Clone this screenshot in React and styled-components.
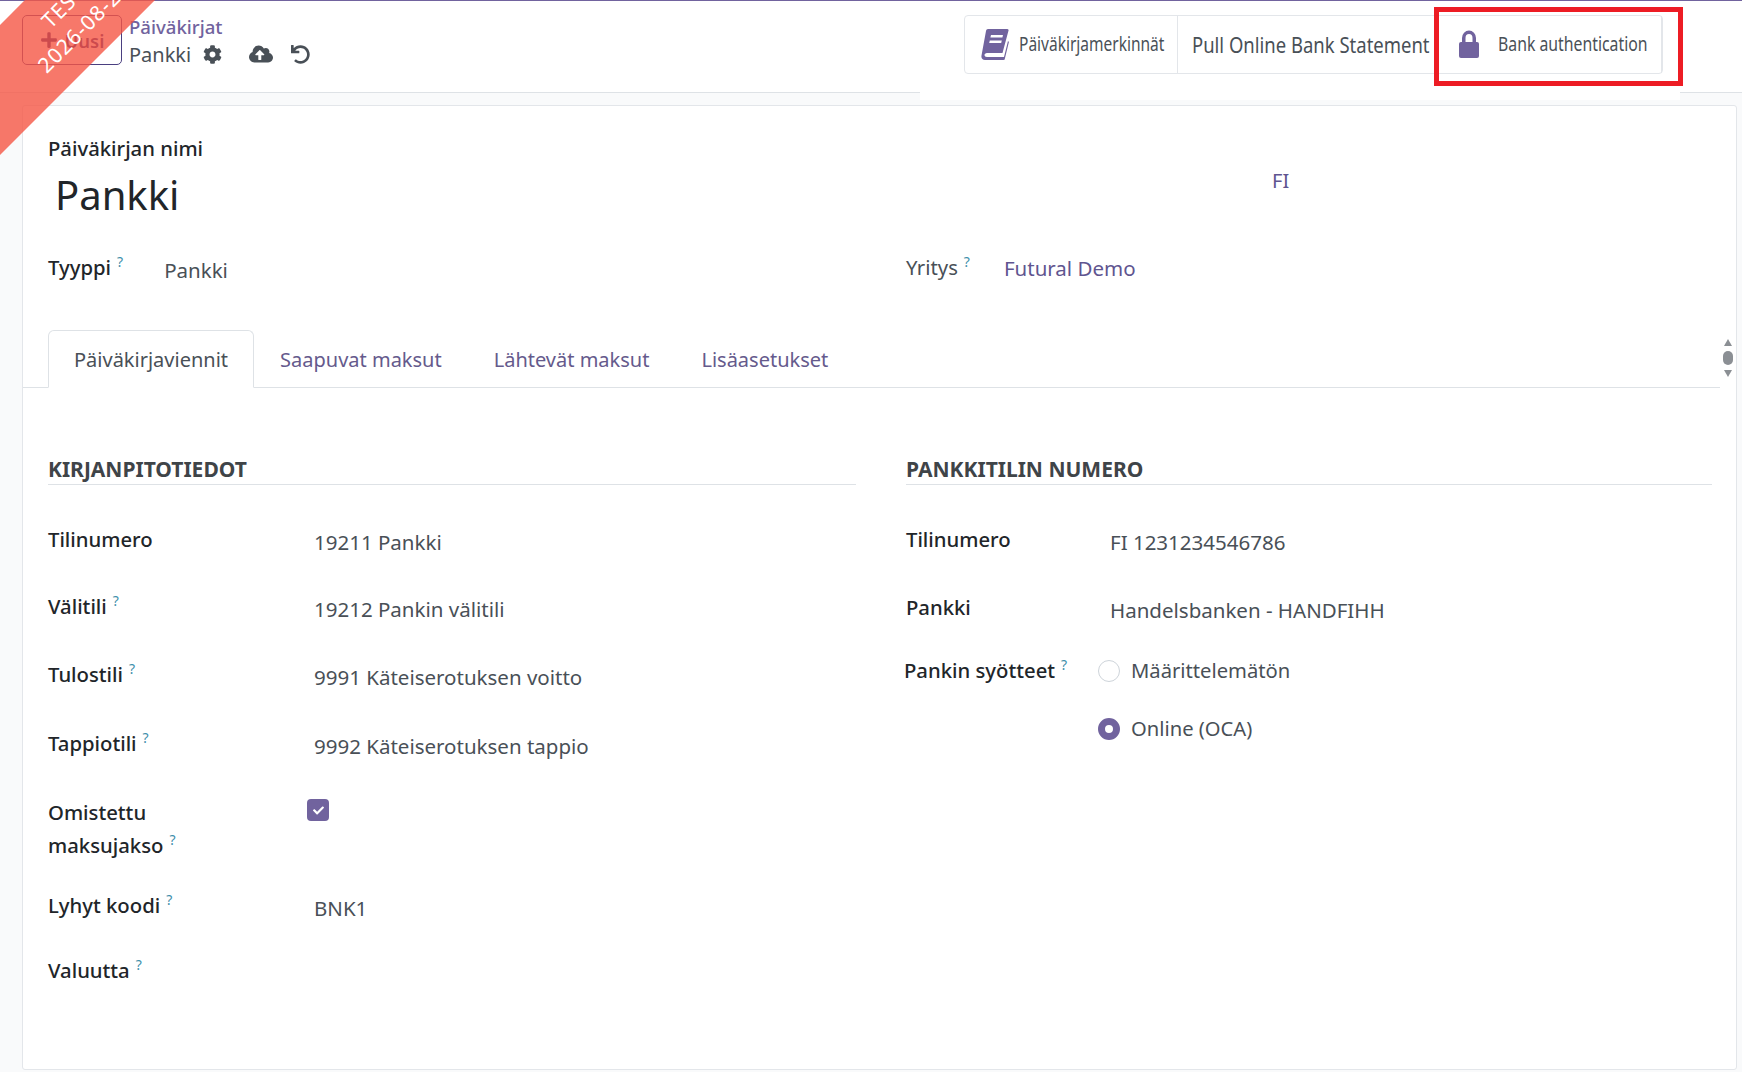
import React from "react";
import styled, { createGlobalStyle } from "styled-components";
import { FaCheck, FaCloudUploadAlt, FaCog, FaPlus, FaUndo } from "react-icons/fa";

const GlobalStyle = createGlobalStyle`
  html, body { margin: 0; padding: 0; }
  body {
    font-family: "Noto Sans", "Open Sans", sans-serif;
    color: #212529;
    background: #f9fafb;
  }
`;

const leftRows = [
  { label: "Tilinumero", value: "19211 Pankki", h: 67 },
  { label: "Välitili", help: true, value: "19212 Pankin välitili", h: 68 },
  { label: "Tulostili", help: true, value: "9991 Käteiserotuksen voitto", h: 69 },
  { label: "Tappiotili", help: true, value: "9992 Käteiserotuksen tappio", h: 69 },
  { label: "Omistettu maksujakso", help: true, check: true, h: 93 },
  { label: "Lyhyt koodi", help: true, value: "BNK1", h: 65 },
  { label: "Valuutta", help: true, h: 40 }
];

const tabs = ["Päiväkirjaviennit", "Saapuvat maksut", "Lähtevät maksut", "Lisäasetukset"];

const Help = () => <HelpMark>?</HelpMark>;

const BookIcon = () => (
  <svg width="28" height="32" viewBox="0 0 28 32" fill="#71639e">
    <path d="M7 1H26a1.5 1.5 0 0 1 1.4 2L21.5 25H6c-1.5 0-2.5 1-2.5 2s1 2 2.5 2h17l4-16 .9 1-4 16.500a1.500 1.500 0 0 1-1.500 1.500H4c-2.500 0-4-2-3.500-4.500L5 3c.2-1.200 1-2 2-2z" />
    <path d="M10 7h12l-.6 2.500h-12zM8.800 12.500h12l-.6 2.500h-12z" fill="#fff" />
  </svg>
);

const LockIcon = () => (
  <svg width="20" height="29" viewBox="0 0 20 29" fill="#71639e">
    <path d="M3 13V9a7 7.500 0 0 1 14 0v4h-3.500V9a3.500 4 0 0 0-7 0v4z" />
    <rect x="0" y="13" width="20" height="16" rx="2" />
  </svg>
);

export default function App() {
  return (
    <Page>
      <GlobalStyle />
      <ControlPanel>
        <NewButton>
          <FaPlus size={18} />
          Uusi
        </NewButton>
        <Breadcrumbs>
          <CrumbLink>Päiväkirjat</CrumbLink>
          <CrumbRow>
            <span>Pankki</span>
            <FaCog size={19} />
            <CloudIcon size={24} />
            <UndoIcon size={19} />
          </CrumbRow>
        </Breadcrumbs>
        <StatPanel>
          <StatGroup>
            <StatButton $w={213} $pad={16} $gap={10}>
              <BookIcon />
              <StatText $w={146} $scale={0.775}>Päiväkirjamerkinnät</StatText>
            </StatButton>
            <StatButton $w={261} $pad={14}>
              <StatText $w={238} $size={22} $scale={0.84}>Pull Online Bank Statement</StatText>
            </StatButton>
            <StatButton $w={223} $pad={20} $gap={19}>
              <LockIcon />
              <StatText $w={149} $scale={0.79}>Bank authentication</StatText>
            </StatButton>
            <Highlight />
          </StatGroup>
        </StatPanel>
      </ControlPanel>

      <Sheet>
        <TitleRow>
          <TitleBlock>
            <TitleLabel>Päiväkirjan nimi</TitleLabel>
            <Title>Pankki</Title>
          </TitleBlock>
          <CountryCode>FI</CountryCode>
        </TitleRow>

        <InfoRow>
          <InfoField $gap={41}>
            <Label>Tyyppi<Help /></Label>
            <Value>Pankki</Value>
          </InfoField>
          <InfoField $gap={34}>
            <LightLabel>Yritys<Help /></LightLabel>
            <CompanyLink>Futural Demo</CompanyLink>
          </InfoField>
        </InfoRow>

        <TabBar>
          {tabs.map((tab, index) => (
            <Tab key={tab} $active={index === 0}>{tab}</Tab>
          ))}
          <Scroller>
            <ArrowUp />
            <Thumb />
            <ArrowDown />
          </Scroller>
        </TabBar>

        <Columns>
          <Column>
            <SectionTitle>Kirjanpitotiedot</SectionTitle>
            <Rows>
              {leftRows.map((row) => (
                <FormRow key={row.label} $h={row.h} $label={266}>
                  <Label $narrow={row.check}>{row.label}{row.help && <Help />}</Label>
                  {row.check ? (
                    <CheckBox><FaCheck size={11} /></CheckBox>
                  ) : (
                    <Value>{row.value}</Value>
                  )}
                </FormRow>
              ))}
            </Rows>
          </Column>
          <Column>
            <SectionTitle>Pankkitilin numero</SectionTitle>
            <Rows>
              <FormRow $h={68} $label={204}>
                <Label>Tilinumero</Label>
                <Value>FI 1231234546786</Value>
              </FormRow>
              <FormRow $h={63} $label={204}>
                <Label>Pankki</Label>
                <Value>Handelsbanken - HANDFIHH</Value>
              </FormRow>
              <FormRow $h={116} $label={204}>
                <FeedLabel>Pankin syötteet<Help /></FeedLabel>
                <RadioList>
                  <RadioOption>
                    <Radio />
                    Määrittelemätön
                  </RadioOption>
                  <RadioOption>
                    <Radio $checked />
                    Online (OCA)
                  </RadioOption>
                </RadioList>
              </FormRow>
            </Rows>
          </Column>
        </Columns>
      </Sheet>

      <RibbonClip>
        <Ribbon>
          <span>TEST</span>
          <span>2026-08-21</span>
        </Ribbon>
      </RibbonClip>
    </Page>
  );
}

const Page = styled.div`
  position: relative;
  width: 1742px;
  height: 1072px;
  overflow: hidden;
  background: #f9fafb;
`;

const ControlPanel = styled.header`
  height: 93px;
  display: flex;
  align-items: flex-start;
  background: #fff;
  border-top: 1px solid #71639e;
  border-bottom: 1px solid #dee2e6;
  box-sizing: border-box;
  padding-left: 22px;
`;

const NewButton = styled.button`
  width: 100px;
  height: 50px;
  margin-top: 14px;
  display: flex;
  align-items: center;
  justify-content: center;
  gap: 7px;
  background: #fff;
  border: 1px solid #4a3f80;
  border-radius: 5px;
  color: #2a1a70;
  font: 600 18.500px "Noto Sans", sans-serif;
`;

const Breadcrumbs = styled.div`
  margin: 13px 0 0 7px;
  display: flex;
  flex-direction: column;
`;

const CrumbLink = styled.a`
  font-size: 18.600px;
  line-height: 26px;
  font-weight: 500;
  color: #71639e;
`;

const CrumbRow = styled.div`
  display: flex;
  align-items: center;
  height: 28px;
  font-size: 20px;
  color: #495057;
  gap: 12px;
`;

const CloudIcon = styled(FaCloudUploadAlt)`
  margin-left: 15px;
`;

const UndoIcon = styled(FaUndo)`
  margin-left: 6px;
`;

const StatPanel = styled.div`
  position: absolute;
  top: 1px;
  left: 920px;
  width: 760px;
  height: 99px;
  background: #fff;
  padding: 14px 0 0 44px;
  box-sizing: border-box;
  z-index: 1;
`;

const StatGroup = styled.div`
  position: relative;
  display: inline-flex;
  height: 57px;
  border: 1px solid #e3e6ea;
  border-radius: 4px;
  background: #fff;
`;

const StatButton = styled.div`
  width: ${(p) => p.$w}px;
  box-sizing: border-box;
  padding: 0 0 2px ${(p) => p.$pad}px;
  display: flex;
  align-items: center;
  gap: ${(p) => p.$gap || 0}px;
  border-right: 1px solid #e3e6ea;
  &:last-of-type { border-right: 0; }
`;

// the reference squeezes this strip sideways, so the text is scaled to its width
const StatText = styled.span`
  display: block;
  width: ${(p) => p.$w}px;
  white-space: nowrap;
  font-size: ${(p) => p.$size || 20}px;
  color: #495057;
  transform-origin: left center;
  transform: scaleX(${(p) => p.$scale});
`;

const Highlight = styled.div`
  position: absolute;
  top: -9px;
  left: 469px;
  width: 249px;
  height: 79px;
  box-sizing: border-box;
  border: 5px solid #ed1c24;
`;

const Sheet = styled.main`
  margin: 12px 5px 0 22px;
  height: 965px;
  box-sizing: border-box;
  background: #fff;
  border: 1px solid #e3e6ea;
  border-radius: 3px;
  padding: 28px 0 0 25px;
`;

const TitleRow = styled.div`
  display: flex;
`;

const TitleBlock = styled.div`
  width: 1225px;
`;

const TitleLabel = styled.div`
  font-size: 20.300px;
  line-height: 28px;
  font-weight: 500;
`;

const Title = styled.h1`
  margin: 3px 0 0 7px;
  font-size: 40px;
  line-height: 60px;
  font-weight: 400;
`;

const CountryCode = styled.div`
  margin-top: 34px;
  margin-left: -1px;
  font-size: 20px;
  line-height: 26px;
  color: #5f5590;
`;

const InfoRow = styled.div`
  margin-top: 26px;
  display: grid;
  grid-template-columns: 858px 1fr;
`;

const InfoField = styled.div`
  display: flex;
  align-items: flex-start;
  gap: ${(p) => p.$gap}px;
`;

const Label = styled.div`
  font-size: 20.300px;
  line-height: 33px;
  font-weight: 500;
  color: #212529;
  max-width: ${(p) => (p.$narrow ? "150px" : "none")};
`;

const LightLabel = styled(Label)`
  font-weight: 400;
  color: #495057;
`;

const FeedLabel = styled(Label)`
  margin-left: -2px;
`;

const HelpMark = styled.sup`
  margin-left: 6px;
  font-size: 14px;
  line-height: 0;
  font-weight: 400;
  color: #3f8fab;
  vertical-align: 8px;
`;

const Value = styled.div`
  font-size: 20.500px;
  line-height: 33px;
  color: #495057;
  padding-top: 3px;
`;

const CompanyLink = styled(Value)`
  color: #5f5590;
  padding-top: 1px;
`;

const TabBar = styled.nav`
  position: relative;
  margin: 43px 16px 0 -25px;
  padding-left: 25px;
  height: 58px;
  box-sizing: border-box;
  display: flex;
  border-bottom: 1px solid #dee2e6;
`;

const Tab = styled.div`
  height: 58px;
  box-sizing: border-box;
  display: flex;
  align-items: center;
  padding: 0 25px;
  font-size: 20px;
  color: ${(p) => (p.$active ? "#495057" : "#655a8c")};
  background: ${(p) => (p.$active ? "#fff" : "transparent")};
  border: 1px solid ${(p) => (p.$active ? "#dee2e6" : "transparent")};
  border-bottom-color: ${(p) => (p.$active ? "#fff" : "transparent")};
  border-radius: 6px 6px 0 0;
`;

const Scroller = styled.div`
  position: absolute;
  top: 9px;
  right: -13px;
  display: flex;
  flex-direction: column;
  align-items: center;
  gap: 5px;
`;

const ArrowUp = styled.div`
  width: 0;
  height: 0;
  border-left: 4px solid transparent;
  border-right: 4px solid transparent;
  border-bottom: 7px solid #8b8f94;
`;

const ArrowDown = styled.div`
  width: 0;
  height: 0;
  border-left: 4px solid transparent;
  border-right: 4px solid transparent;
  border-top: 7px solid #8b8f94;
`;

const Thumb = styled.div`
  width: 10px;
  height: 14px;
  border-radius: 5px;
  background: #8b8f94;
`;

const Columns = styled.div`
  margin-top: 67px;
  display: grid;
  grid-template-columns: 808px 806px;
  column-gap: 50px;
`;

const Column = styled.section`
  display: flex;
  flex-direction: column;
`;

const SectionTitle = styled.h2`
  margin: 0;
  height: 30px;
  box-sizing: border-box;
  font-size: 21px;
  line-height: 28px;
  font-weight: 700;
  text-transform: uppercase;
  color: #3f4448;
  border-bottom: 1px solid #dee2e6;
`;

const Rows = styled.div`
  margin-top: 38px;
`;

const FormRow = styled.div`
  height: ${(p) => p.$h}px;
  display: grid;
  grid-template-columns: ${(p) => p.$label}px 1fr;
  align-items: start;
`;

const CheckBox = styled.div`
  width: 22px;
  height: 22px;
  margin: 3px 0 0 -7px;
  display: flex;
  align-items: center;
  justify-content: center;
  border-radius: 4px;
  background: #71639e;
  color: #fff;
`;

const RadioList = styled.div`
  margin-left: -12px;
  display: flex;
  flex-direction: column;
  gap: 25px;
`;

const RadioOption = styled.div`
  display: flex;
  align-items: center;
  gap: 11px;
  font-size: 20.200px;
  line-height: 33px;
  color: #495057;
`;

const Radio = styled.span`
  width: 22px;
  height: 22px;
  box-sizing: border-box;
  border-radius: 50%;
  background: #fff;
  border: ${(p) => (p.$checked ? "7.500px solid #71639e" : "1px solid #ced4da")};
`;

const RibbonClip = styled.div`
  position: absolute;
  top: 0;
  left: 0;
  width: 220px;
  height: 220px;
  overflow: hidden;
  pointer-events: none;
  z-index: 2;
`;

const Ribbon = styled.div`
  position: absolute;
  top: -26px;
  left: -80px;
  width: 300px;
  height: 92px;
  box-sizing: border-box;
  padding-left: 10px;
  display: flex;
  flex-direction: column;
  align-items: center;
  justify-content: center;
  transform: rotate(-45deg);
  background: rgba(245, 86, 69, 0.8);
  color: #fff;
  font-size: 21px;
  line-height: 29px;
  letter-spacing: 1px;
`;
